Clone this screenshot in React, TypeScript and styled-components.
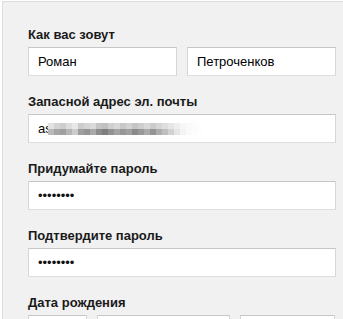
import React from "react";
import styled, {createGlobalStyle} from "styled-components";

const GlobalStyle = createGlobalStyle`
  body {
    margin: 0;
    background: #ffffff;
    font-family: "Liberation Sans", Arial, sans-serif;
  }
`;

const Panel = styled.div`
  margin: 1px 0 0 2px;
  padding: 25px 0 0 25px;
  background-color: #f1f1f1;
  border-top: 1px solid #dcdcdc;
  border-left: 1px solid #dcdcdc;
`;

const Form = styled.div`
  display: flex;
  flex-direction: column;
  gap: 18px;
  width: 308px;
`;

const Group = styled.div`
  display: flex;
  flex-direction: column;
`;

const Label = styled.div`
  font-size: 13px;
  line-height: 16px;
  font-weight: 700;
  color: #1a1a1a;
  margin-bottom: 4px;
`;

const Row = styled.div<{ $columns: string }>`
  display: grid;
  grid-template-columns: ${p => p.$columns};
  column-gap: 10px;
`;

const Field = styled.div`
  box-sizing: border-box;
  display: flex;
  align-items: center;
  height: 29px;
  padding: 0 9px;
  background: #ffffff;
  border: 1px solid #d6d6d6;
  border-top-color: #c6c6c6;
  border-bottom-color: #dedede;
  font-size: 13px;
  color: #000000;
  white-space: nowrap;
  overflow: hidden;
`;

const Dots = styled.span`
  font-size: 13px;
  color: #111111;
`;

const Mosaic = styled.div`
  display: grid;
  grid-template-columns: repeat(26, 6px);
  grid-template-rows: 6px 6px;
  margin-left: -4px;
  margin-top: 1px;
`;

const Cell = styled.span<{ $shade: number }>`
  background-color: ${p => `rgb(${p.$shade}, ${p.$shade}, ${p.$shade})`};
`;

// pixelated (blurred) part of the address
const topRow = [
  226, 212, 206, 220, 232, 204, 212, 218, 198, 192, 208, 216, 200,
  210, 196, 206, 216, 204, 214, 222, 230, 238, 246, 250, 252, 254,
];
const bottomRow = [
  186, 166, 160, 182, 204, 158, 148, 170, 140, 126, 146, 164, 150,
  160, 138, 152, 170, 148, 172, 190, 210, 230, 244, 250, 252, 254,
];

const EmailMosaic = () => (
  <Mosaic>
    {topRow.map((s, i) => <Cell key={"t" + i} $shade={s} />)}
    {bottomRow.map((s, i) => <Cell key={"b" + i} $shade={s} />)}
  </Mosaic>
);

export default function App() {
  return (
    <>
      <GlobalStyle />
      <Panel>
        <Form>
          <Group>
            <Label>Как вас зовут</Label>
            <Row $columns="149px 149px">
              <Field>Роман</Field>
              <Field>Петроченков</Field>
            </Row>
          </Group>
          <Group>
            <Label>Запасной адрес эл. почты</Label>
            <Field>
              as
              <EmailMosaic />
            </Field>
          </Group>
          <Group>
            <Label>Придумайте пароль</Label>
            <Field><Dots>••••••••</Dots></Field>
          </Group>
          <Group>
            <Label>Подтвердите пароль</Label>
            <Field><Dots>••••••••</Dots></Field>
          </Group>
          <Group>
            <Label>Дата рождения</Label>
            <Row $columns="59px 133px 95px">
              <Field />
              <Field />
              <Field />
            </Row>
          </Group>
        </Form>
      </Panel>
    </>
  );
}
